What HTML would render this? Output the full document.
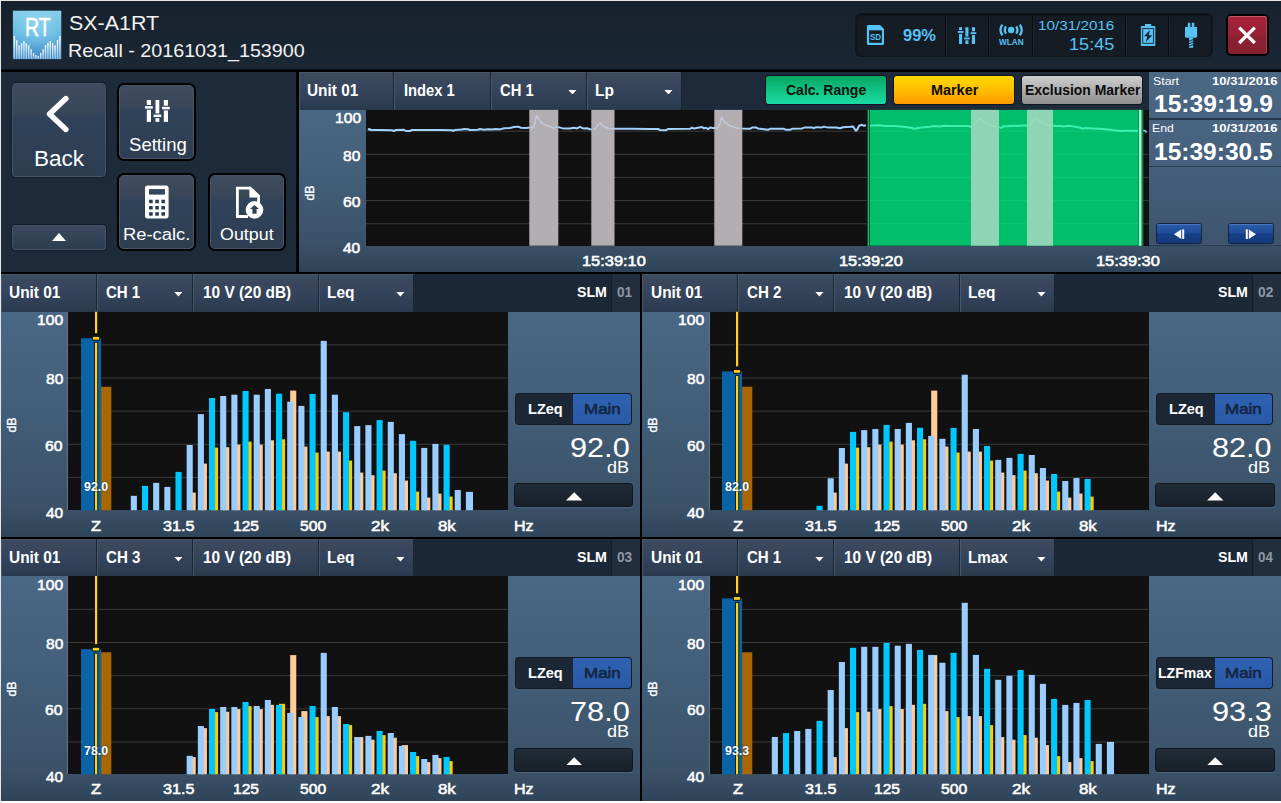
<!DOCTYPE html><html><head><meta charset="utf-8"><title>SX-A1RT Recall</title><style>
html,body{margin:0;padding:0}
body{width:1281px;height:803px;overflow:hidden;background:#fff;font-family:"Liberation Sans",sans-serif}
#r{position:absolute;left:0;top:0;width:1281px;height:803px;overflow:hidden;background:#fff}
#r div,#r span,#r svg{position:absolute;box-sizing:border-box}
.t{white-space:nowrap;line-height:1;transform-origin:0 0;display:block}
.tab{background:linear-gradient(#3d4b5f,#33435a 55%,#2a3a4e);border-right:1px solid #1b2532;box-shadow:inset 1px 0 0 #4a586b,inset 0 1px 0 #46556a}
.btn{border-radius:5px;background:linear-gradient(#3f4c5f 0%,#394759 27%,#30435a 36%,#2e3e52 100%);border:1px solid #48566a;box-shadow:0 0 0 2px #000}
.yax{background:linear-gradient(#4a6783,#435f79 45%,#3a5168)}
.xbar{background:linear-gradient(#3a5067,#2f4458)}
.side{background:linear-gradient(#4a6783,#435f79 45%,#3a5168)}
.plot{background:#111}
.dk{background:linear-gradient(#212c36,#19212a);border:1px solid #10171e;border-radius:3px;box-shadow:0 1px 0 #4a627a}
</style></head><body><div id="r">
<div style="left:0px;top:0px;width:1281px;height:1px;background:#e6e6e6"></div>
<div style="left:0px;top:0px;width:1px;height:801px;background:#e6e6e6"></div>
<div style="left:1px;top:1px;width:1280px;height:800px;background:#000"></div>
<div style="left:1px;top:1px;width:1280px;height:69px;background:linear-gradient(#17212c,#1b2735)"></div>
<div style="left:1px;top:69px;width:1280px;height:1px;background:rgba(0,0,0,.6)"></div>
<svg style="left:12px;top:10px" width="50" height="50" viewBox="12 10 50 50">
<defs><linearGradient id="lg" x1="0" y1="0" x2="0" y2="1"><stop offset="0" stop-color="#82cbea"/><stop offset=".5" stop-color="#62b6e0"/><stop offset="1" stop-color="#3f88c6"/></linearGradient>
<radialGradient id="lr" cx=".5" cy=".3" r=".6"><stop offset="0" stop-color="#9fe0f4" stop-opacity=".55"/><stop offset="1" stop-color="#9fe0f4" stop-opacity="0"/></radialGradient>
<linearGradient id="lb" x1="0" y1="0" x2="0" y2="1"><stop offset="0" stop-color="#fff" stop-opacity="1"/><stop offset="1" stop-color="#d8ecfa" stop-opacity=".55"/></linearGradient></defs>
<rect x="12.9" y="10.7" width="48.4" height="48.4" fill="url(#lg)"/><rect x="12.9" y="10.7" width="48.4" height="48.4" fill="url(#lr)"/>
<rect x="13.65" y="36.0" width="1.4" height="23.1" fill="url(#lb)"/>
<rect x="16.05" y="40.3" width="1.4" height="18.8" fill="url(#lb)"/>
<rect x="18.44" y="45.4" width="1.4" height="13.7" fill="url(#lb)"/>
<rect x="20.84" y="43.2" width="1.4" height="15.9" fill="url(#lb)"/>
<rect x="23.24" y="41.1" width="1.4" height="18.0" fill="url(#lb)"/>
<rect x="25.64" y="43.2" width="1.4" height="15.9" fill="url(#lb)"/>
<rect x="28.03" y="45.4" width="1.4" height="13.7" fill="url(#lb)"/>
<rect x="30.43" y="49.4" width="1.4" height="9.7" fill="url(#lb)"/>
<rect x="32.83" y="53.0" width="1.4" height="6.1" fill="url(#lb)"/>
<rect x="35.22" y="55.1" width="1.4" height="4.0" fill="url(#lb)"/>
<rect x="37.62" y="55.9" width="1.4" height="3.2" fill="url(#lb)"/>
<rect x="40.02" y="53.0" width="1.4" height="6.1" fill="url(#lb)"/>
<rect x="42.41" y="49.4" width="1.4" height="9.7" fill="url(#lb)"/>
<rect x="44.81" y="45.0" width="1.4" height="14.1" fill="url(#lb)"/>
<rect x="47.21" y="42.9" width="1.4" height="16.2" fill="url(#lb)"/>
<rect x="49.60" y="41.1" width="1.4" height="18.0" fill="url(#lb)"/>
<rect x="52.00" y="43.2" width="1.4" height="15.9" fill="url(#lb)"/>
<rect x="54.40" y="45.4" width="1.4" height="13.7" fill="url(#lb)"/>
<rect x="56.80" y="40.0" width="1.4" height="19.1" fill="url(#lb)"/>
<rect x="59.19" y="36.0" width="1.4" height="23.1" fill="url(#lb)"/>
</svg>
<span class="t" style="left:24.83px;top:15.33px;font-size:25.24px;font-weight:400;color:#fff;transform:scaleX(0.7761);-webkit-text-stroke:0.5px #fff;">RT</span>
<span class="t" style="left:68.74px;top:13.07px;font-size:20.71px;font-weight:400;color:#f2f2f2;transform:scaleX(1.0344);">SX-A1RT</span>
<span class="t" style="left:68.12px;top:40.86px;font-size:19.07px;font-weight:400;color:#f2f2f2;transform:scaleX(1.0339);">Recall - 20161031_153900</span>
<div style="left:856px;top:14px;width:356px;height:42px;background:#161c23;border-radius:5px;box-shadow:0 0 0 1px #10161c, inset 0 1px 2px #0b0f14"></div>
<div style="left:945px;top:15px;width:1px;height:40px;background:#090c10"></div>
<div style="left:946px;top:15px;width:1px;height:40px;background:#1e252d"></div>
<div style="left:988px;top:15px;width:1px;height:40px;background:#090c10"></div>
<div style="left:989px;top:15px;width:1px;height:40px;background:#1e252d"></div>
<div style="left:1032px;top:15px;width:1px;height:40px;background:#090c10"></div>
<div style="left:1033px;top:15px;width:1px;height:40px;background:#1e252d"></div>
<div style="left:1125px;top:15px;width:1px;height:40px;background:#090c10"></div>
<div style="left:1126px;top:15px;width:1px;height:40px;background:#1e252d"></div>
<div style="left:1168px;top:15px;width:1px;height:40px;background:#090c10"></div>
<div style="left:1169px;top:15px;width:1px;height:40px;background:#1e252d"></div>
<svg style="left:866px;top:24px" width="20" height="22" viewBox="866 24 20 22">
<path d="M866.9 26.4 Q866.9 25 868.3 25 H880 L884 29 V43.6 Q884 45 882.6 45 H868.3 Q866.9 45 866.9 43.6 Z" fill="#56c3f8"/>
<rect x="869.1" y="30.3" width="12.8" height="12.5" fill="#171d24"/>
<text x="875.5" y="40" font-family="Liberation Sans,sans-serif" font-size="8.7" font-weight="700" fill="#56c3f8" text-anchor="middle" textLength="11.2" lengthAdjust="spacingAndGlyphs">SD</text></svg>
<span class="t" style="left:903.42px;top:27.35px;font-size:17.42px;font-weight:700;color:#56c3f8;transform:scaleX(0.9439);">99%</span>
<svg style="left:955px;top:25px" width="24" height="21" viewBox="955 25 24 21"><rect x="959.05" y="27.2" width="3.1" height="16.8" fill="#56c3f8"/><rect x="957.4499999999999" y="30.05" width="6.3" height="3.8" fill="#171d24"/><rect x="957.75" y="31.0" width="5.7" height="1.9" fill="#56c3f8"/><rect x="965.35" y="27.2" width="3.1" height="16.8" fill="#56c3f8"/><rect x="963.75" y="36.550000000000004" width="6.3" height="3.8" fill="#171d24"/><rect x="964.0500000000001" y="37.5" width="5.7" height="1.9" fill="#56c3f8"/><rect x="971.9" y="27.2" width="3.1" height="16.8" fill="#56c3f8"/><rect x="970.3" y="31.300000000000004" width="6.3" height="3.8" fill="#171d24"/><rect x="970.6" y="32.25" width="5.7" height="1.9" fill="#56c3f8"/></svg>
<svg style="left:997px;top:22px" width="28" height="16" viewBox="997 22 28 16">
<circle cx="1011.1" cy="30" r="3.25" fill="#56c3f8"/>
<g fill="none" stroke="#56c3f8" stroke-width="2.3" stroke-linecap="butt">
<path d="M1006 26.3 Q1003.5 30 1006 33.7"/><path d="M1016.2 26.3 Q1018.7 30 1016.2 33.7"/>
<path d="M1002.4 24.6 Q998.6 30 1002.4 35.4"/><path d="M1019.8 24.6 Q1023.6 30 1019.8 35.4"/></g></svg>
<span class="t" style="left:999.00px;top:38.00px;font-size:8.50px;font-weight:700;color:#56c3f8;transform:scaleX(0.9631);">WLAN</span>
<span class="t" style="left:1037.85px;top:20.48px;font-size:12.89px;font-weight:400;color:#56c3f8;transform:scaleX(1.1847);">10/31/2016</span>
<span class="t" style="left:1069.14px;top:36.76px;font-size:15.64px;font-weight:400;color:#56c3f8;transform:scaleX(1.1583);">15:45</span>
<svg style="left:1139px;top:22px" width="18" height="26" viewBox="1139 22 18 26">
<rect x="1145" y="24" width="6.2" height="2.6" fill="#56c3f8"/>
<rect x="1140.9" y="25.9" width="14.4" height="20.1" rx="0.8" fill="#56c3f8"/>
<rect x="1142.7" y="28.6" width="10.8" height="14.7" fill="none" stroke="#1b242e" stroke-width="0.9"/>
<path d="M1150 30 L1144 36.2 H1147.2 L1145.9 41.9 L1152.2 35.3 H1148.7 Z" fill="#1b242e"/></svg>
<svg style="left:1183px;top:21px" width="16" height="28" viewBox="1183 21 16 28">
<g fill="#56c3f8"><rect x="1187.8" y="22.8" width="2.5" height="5"/><rect x="1191.8" y="22.8" width="2.5" height="5"/>
<path d="M1185 26.9 H1197.1 V36.2 Q1197.1 37.8 1195.5 37.8 H1186.6 Q1185 37.8 1185 36.2 Z"/>
<rect x="1189" y="37.6" width="4.1" height="10.2"/></g>
<g stroke="#171d24" stroke-width="0.9"><line x1="1188.6" y1="41.4" x2="1193.5" y2="39.4"/><line x1="1188.6" y1="43.9" x2="1193.5" y2="41.9"/><line x1="1188.6" y1="46.4" x2="1193.5" y2="44.4"/></g></svg>
<div style="left:1226px;top:14px;width:43px;height:42px;background:#000;border-radius:5px"></div>
<div style="left:1228px;top:16px;width:39px;height:38px;border-radius:3px;background:linear-gradient(#a62238,#962034 50%,#8c2132 52%,#842030);box-shadow:inset 0 1px 0 #c4566a, inset -1px 0 0 #b03a50"></div>
<svg style="left:1236px;top:24px" width="22" height="22" viewBox="0 0 22 22"><g stroke="#fff" stroke-width="3.2" stroke-linecap="butt"><line x1="3.2" y1="3.6" x2="18.8" y2="19"/><line x1="18.8" y1="3.6" x2="3.2" y2="19"/></g></svg>
<div style="left:1px;top:72px;width:296px;height:200px;background:#1c2a3a"></div>
<div style="left:296px;top:72px;width:1px;height:200px;background:rgba(0,0,0,.75)"></div>
<div style="left:12px;top:83px;width:94px;height:94px;border-radius:4px;background:linear-gradient(#3e4b5e 0%,#38475a 30%,#30425a 37%,#2d3d51 100%);border:1px solid #46546a;box-shadow:0 0 0 1px #141d28"></div>
<svg style="left:44px;top:92px" width="30" height="44" viewBox="0 0 30 44"><path d="M21.9 6.5 L5.5 22 L21.9 37.5" fill="none" stroke="#fff" stroke-width="5.4" stroke-linecap="round" stroke-linejoin="round"/></svg>
<span class="t" style="left:33.99px;top:148.05px;font-size:21.67px;font-weight:400;color:#fff;transform:scaleX(1.0411);">Back</span>
<div style="left:12px;top:225px;width:94px;height:25px;border-radius:3px;background:linear-gradient(#3b495d,#2c3d52);border:1px solid #46546a;box-shadow:0 0 0 1px #141d28"></div>
<svg style="left:51px;top:232px" width="16" height="10" viewBox="0 0 16 10"><path d="M8 1 L15 9 H1 Z" fill="#fff"/></svg>
<div class="btn" style="left:119px;top:85px;width:75px;height:74px;"></div>
<div class="btn" style="left:119px;top:175px;width:75px;height:74px;"></div>
<div class="btn" style="left:210px;top:175px;width:74px;height:74px;"></div>
<svg style="left:145.1px;top:100px" width="24.8" height="21.9" viewBox="0 0 24.8 22" preserveAspectRatio="none"><rect x="1.7999999999999998" y="0" width="4.2" height="22" fill="#fff"/><rect x="-0.6999999999999997" y="5.0" width="9.2" height="4.8" fill="#33455a"/><rect x="0.04999999999999982" y="6.15" width="7.7" height="2.5" fill="#fff"/><rect x="10.5" y="0" width="3.8" height="22" fill="#fff"/><rect x="7.800000000000001" y="13.5" width="9.2" height="4.8" fill="#33455a"/><rect x="8.55" y="14.65" width="7.7" height="2.5" fill="#fff"/><rect x="18.799999999999997" y="0" width="4.2" height="22" fill="#fff"/><rect x="16.299999999999997" y="5.699999999999999" width="9.2" height="4.8" fill="#33455a"/><rect x="17.049999999999997" y="6.85" width="7.7" height="2.5" fill="#fff"/></svg>
<span class="t" style="left:128.86px;top:136.70px;font-size:17.83px;font-weight:400;color:#fff;transform:scaleX(1.0413);">Setting</span>
<svg style="left:140px;top:180px" width="40" height="44" viewBox="140 180 40 44"><rect x="145" y="185.6" width="23.6" height="32.8" rx="2.6" fill="#fff"/><rect x="149" y="189.1" width="15.9" height="5.5" fill="#34465b"/><rect x="149.1" y="199.7" width="3.6" height="3.5" fill="#2a3b50"/><rect x="155.25" y="199.7" width="3.6" height="3.5" fill="#2a3b50"/><rect x="161.4" y="199.7" width="3.6" height="3.5" fill="#2a3b50"/><rect x="149.1" y="206" width="3.6" height="3.5" fill="#2a3b50"/><rect x="155.25" y="206" width="3.6" height="3.5" fill="#2a3b50"/><rect x="161.4" y="206" width="3.6" height="3.5" fill="#2a3b50"/><rect x="149.1" y="212.2" width="3.6" height="3.5" fill="#2a3b50"/><rect x="155.25" y="212.2" width="3.6" height="3.5" fill="#2a3b50"/><rect x="161.4" y="212.2" width="3.6" height="3.5" fill="#2a3b50"/></svg>
<span class="t" style="left:123.13px;top:227.32px;font-size:16.87px;font-weight:400;color:#fff;transform:scaleX(1.0888);">Re-calc.</span>
<svg style="left:230px;top:180px" width="40" height="44" viewBox="230 180 40 44">
<path d="M258.6 203 V196 L250 188.2 H237.4 V216.5 H248" fill="none" stroke="#fff" stroke-width="2.8" stroke-linejoin="miter"/>
<path d="M249.4 186.8 H250.6 L260 195.6 V197.4 H249.4 Z" fill="#fff"/>
<circle cx="254.5" cy="209.9" r="8.8" fill="#fff"/>
<path d="M254.5 205 L259 209 H256.6 V213.8 H252.4 V209 H250 Z" fill="#2f4156"/></svg>
<span class="t" style="left:220.10px;top:227.32px;font-size:16.87px;font-weight:400;color:#fff;transform:scaleX(1.0588);">Output</span>
<div style="left:299px;top:72px;width:982px;height:200px;background:#1c2a3a"></div>
<div class="tab" style="left:299px;top:72px;width:95px;height:38px;"></div>
<div class="tab" style="left:394px;top:72px;width:97px;height:38px;"></div>
<div class="tab" style="left:491px;top:72px;width:96px;height:38px;"></div>
<div class="tab" style="left:587px;top:72px;width:95px;height:38px;"></div>
<span class="t" style="left:307.48px;top:82.65px;font-size:15.78px;font-weight:700;color:#fff;transform:scaleX(0.9753);">Unit 01</span>
<span class="t" style="left:403.84px;top:82.65px;font-size:15.78px;font-weight:700;color:#fff;transform:scaleX(0.9334);">Index 1</span>
<span class="t" style="left:500.01px;top:82.65px;font-size:15.78px;font-weight:700;color:#fff;transform:scaleX(0.9351);">CH 1</span>
<span class="t" style="left:595.19px;top:82.63px;font-size:15.80px;font-weight:700;color:#fff;transform:scaleX(0.9820);">Lp</span>
<svg style="left:568.2px;top:89.8px" width="8.8" height="4.6" viewBox="0 0 10 5"><path d="M0.4 0 H9.6 L5 5 Z" fill="#fff"/></svg>
<svg style="left:663.8px;top:89.8px" width="8.8" height="4.6" viewBox="0 0 10 5"><path d="M0.4 0 H9.6 L5 5 Z" fill="#fff"/></svg>
<div style="left:766px;top:76px;width:120px;height:28px;border-radius:3px;background:linear-gradient(#08a562,#12c888 60%,#1bdba2);box-shadow:0 0 0 1px #0d1620"></div>
<span class="t" style="left:785.94px;top:82.92px;font-size:14.27px;font-weight:700;color:#07130e;transform:scaleX(0.9817);">Calc. Range</span>
<div style="left:894px;top:76px;width:120px;height:28px;border-radius:3px;background:linear-gradient(#ffd800,#ffc400 40%,#ff9a00);box-shadow:0 0 0 1px #0d1620"></div>
<span class="t" style="left:930.66px;top:82.92px;font-size:14.27px;font-weight:700;color:#0d0a02;transform:scaleX(1.0098);">Marker</span>
<div style="left:1022px;top:76px;width:120px;height:28px;border-radius:3px;background:linear-gradient(#cfcfcf,#b0b0b0 45%,#8e8e8e);box-shadow:0 0 0 1px #0d1620"></div>
<span class="t" style="left:1024.69px;top:82.92px;font-size:14.27px;font-weight:700;color:#0b0b0b;transform:scaleX(0.9762);">Exclusion Marker</span>
<div class="yax" style="left:299px;top:110px;width:67px;height:136px;"></div>
<div class="plot" style="left:366px;top:110px;width:783px;height:136px;"></div>
<div class="xbar" style="left:299px;top:246px;width:982px;height:26px;"></div>
<svg style="left:366px;top:109px" width="783" height="138" viewBox="366 109 783 138"><line x1="366" x2="1148.7" y1="131.2" y2="131.2" stroke="#3c3c3c" stroke-width="1"/><line x1="366" x2="1148.7" y1="154.3" y2="154.3" stroke="#3c3c3c" stroke-width="1"/><line x1="366" x2="1148.7" y1="177.4" y2="177.4" stroke="#3c3c3c" stroke-width="1"/><line x1="366" x2="1148.7" y1="200.6" y2="200.6" stroke="#3c3c3c" stroke-width="1"/><line x1="366" x2="1148.7" y1="223.8" y2="223.8" stroke="#3c3c3c" stroke-width="1"/><polyline fill="none" stroke="#a4d2ff" stroke-width="2" stroke-linejoin="round" points="368,130 369,129 371,130 380,130 392,130.2 394,131 396,130 404,129.8 406,131 410,131 412,130 440,130 452,130.2 453,131 455,130 462,129.6 464,129 468,129.2 470,130 478,129.8 480,129 484,129.8 488,129.2 492,129.6 496,129 500,129.4 504,128.32 510,128.0 514,126.92 518,126.64 521,127.78 526,128.08 530,127.6 533,127.94 535,123.3 536.5,115.87 538,117.24 540,120.7 543,123.8 547,125.8 551,127.0 554,128.2 557,126.8 560,127.6 564,128.6 570,128.4 574,127.8 577,128.4 580,126.8 583,128.4 587,128.2 590,129.2 594,129.6 596,127.6 599,123.8 600.5,122.8 602,125.0 605,127.2 609,128.4 614,128.8 630,128.8 650,129.0 658,129.0 660,130.0 666,130.2 668,129.0 690,128.8 692,127.6 694,128.6 698,127.8 702,127.0 704,128.4 706,127.8 708,129.2 710,127.6 714,128.2 718,127.8 720,123.2 721.5,117.4 723,119.4 725,122.2 728,124.8 732,126.6 736,127.8 740,128.6 750,128.8 752,127.6 756,127.4 758,128.6 764,129.2 768,129.8 770,128.8 784,128.8 786,129.8 790,129.8 792,128.8 802,128.4 805,127.4 812,127.4 814,128.2 816,127.2 822,127.4 824,126.6 828,127.6 836,127.4 840,128.2 843,127.2 850,126.8 853,126.4 854.5,128.8 856,130.8 857.5,129.0 859,125.8 862,124.8 864,125.8 866,125.2"/><polyline fill="none" stroke="#9fd0ff" stroke-width="1.5" points="1143,130.4 1145,130.6 1146.5,132.4"/><rect x="529.3" y="109.9" width="29.0" height="135.79999999999998" fill="#b2aeb2"/><rect x="591.3" y="109.9" width="23.200000000000045" height="135.79999999999998" fill="#b2aeb2"/><rect x="714.3" y="109.9" width="28.0" height="135.79999999999998" fill="#b2aeb2"/><polyline fill="none" stroke="#c2cadb" stroke-width="1.5" stroke-linejoin="round" points="530,127.6 533,127.94 535,123.3 536.5,115.87 538,117.24 540,120.7 543,123.8 547,125.8 551,127.0 554,128.2 557,126.8"/><polyline fill="none" stroke="#c2cadb" stroke-width="1.5" stroke-linejoin="round" points="594,129.6 596,127.6 599,123.8 600.5,122.8 602,125.0 605,127.2 609,128.4 614,128.8"/><polyline fill="none" stroke="#c2cadb" stroke-width="1.5" stroke-linejoin="round" points="714,128.2 718,127.8 720,123.2 721.5,117.4 723,119.4 725,122.2 728,124.8 732,126.6 736,127.8 740,128.6"/><rect x="867" y="109.9" width="276.2" height="135.79999999999998" fill="#00be69"/><line x1="870" x2="1139" y1="131.2" y2="131.2" stroke="#10c777" stroke-width="1"/><line x1="870" x2="1139" y1="154.3" y2="154.3" stroke="#10c777" stroke-width="1"/><line x1="870" x2="1139" y1="177.4" y2="177.4" stroke="#10c777" stroke-width="1"/><line x1="870" x2="1139" y1="200.6" y2="200.6" stroke="#10c777" stroke-width="1"/><line x1="870" x2="1139" y1="223.8" y2="223.8" stroke="#10c777" stroke-width="1"/><rect x="971" y="109.9" width="28" height="135.79999999999998" fill="#8fd5b5"/><rect x="1027" y="109.9" width="26" height="135.79999999999998" fill="#8fd5b5"/><polyline fill="none" stroke="#35eaa4" stroke-width="1.7" stroke-linejoin="round" points="870,126 872,125.4 880,125.2 884,126 896,126 900,126.6 906,127 912,128 914,128.8 918,128 924,127.2 930,126.8 934,126 940,126.4 944,125.8 950,126 960,126 968,126 970,126.6 1001,128 1003,126.6 1010,126 1020,125.8 1060,126 1064,126.6 1068,125.8 1074,126.6 1080,127.6 1082,128.6 1086,128 1092,128.4 1100,128.8 1108,129.6 1116,130.4 1120,131 1128,130.8 1138,130.8" style="display:none"/><polyline fill="none" stroke="#3cf0ae" stroke-width="2" stroke-linejoin="round" points="870,126 872,125.4 880,125.2 884,126 896,126 900,126.6 906,127 912,128 914,128.8 918,128 924,127.2 930,126.8 934,126 940,126.4 944,125.8 950,126 960,126 968,126 970,126.6 972,126.6"/><polyline fill="none" stroke="#9adcbe" stroke-width="1.3" stroke-linejoin="round" points="970,126.6 972,126.6 975,124 978,120.4 979.5,118.2 981,119.6 984,122.4 988,124.6 992,126 996,126.6 999,126.8"/><polyline fill="none" stroke="#3cf0ae" stroke-width="2" stroke-linejoin="round" points="999,126.8 1001,128 1003,126.6 1010,126 1020,125.8 1027,125.6"/><polyline fill="none" stroke="#9adcbe" stroke-width="1.3" stroke-linejoin="round" points="1027,125.6 1030,124.6 1033,121 1035.5,117.6 1037.5,118.4 1040,121 1044,123.6 1048,125.2 1053,125.8"/><polyline fill="none" stroke="#3cf0ae" stroke-width="2" stroke-linejoin="round" points="1053,125.8 1060,126 1064,126.6 1068,125.8 1074,126.6 1080,127.6 1082,128.6 1086,128 1092,128.4 1100,128.8 1108,129.6 1116,130.4 1120,131 1128,130.8 1138,130.8"/><rect x="867" y="109.9" width="1" height="135.79999999999998" fill="#075a2c"/><rect x="868" y="109.9" width="1" height="135.79999999999998" fill="#19b060"/><rect x="869" y="109.9" width="1" height="135.79999999999998" fill="#064d26"/><rect x="1138.2" y="109.9" width="1" height="135.79999999999998" fill="#0c9a52"/><rect x="1139.2" y="109.9" width="2" height="135.79999999999998" fill="#c9ffe4"/><rect x="1142.2" y="109.9" width="1" height="135.79999999999998" fill="#0a6d38"/></svg>
<span class="t" style="left:334.58px;top:109.93px;font-size:15.50px;font-weight:400;color:#fff;transform:scaleX(1.0081);-webkit-text-stroke:0.55px #fff;">100</span>
<span class="t" style="left:343.33px;top:148.33px;font-size:15.50px;font-weight:400;color:#fff;transform:scaleX(1.0035);-webkit-text-stroke:0.55px #fff;">80</span>
<span class="t" style="left:343.16px;top:193.93px;font-size:15.50px;font-weight:400;color:#fff;transform:scaleX(1.0133);-webkit-text-stroke:0.55px #fff;">60</span>
<span class="t" style="left:343.44px;top:240.33px;font-size:15.50px;font-weight:400;color:#fff;transform:scaleX(0.9967);-webkit-text-stroke:0.55px #fff;">40</span>
<span class="t" style="left:310.3px;top:192.5px;font-size:13.4px;font-weight:400;color:#fff;-webkit-text-stroke:0.35px #fff;transform:translate(-50%,-50%) rotate(-90deg) scaleX(.93);transform-origin:50% 50%">dB</span>
<span class="t" style="left:582.27px;top:254.32px;font-size:14.27px;font-weight:400;color:#fff;transform:scaleX(1.1497);-webkit-text-stroke:0.55px #fff;">15:39:10</span>
<span class="t" style="left:839.47px;top:254.32px;font-size:14.27px;font-weight:400;color:#fff;transform:scaleX(1.1497);-webkit-text-stroke:0.55px #fff;">15:39:20</span>
<span class="t" style="left:1096.47px;top:254.32px;font-size:14.27px;font-weight:400;color:#fff;transform:scaleX(1.1497);-webkit-text-stroke:0.55px #fff;">15:39:30</span>
<div style="left:1149px;top:72px;width:132px;height:173px;background:linear-gradient(#4a6784 0%,#46627f 45%,#3d546c 100%)"></div>
<div style="left:1149px;top:118px;width:132px;height:2px;background:#26384c"></div>
<div style="left:1149px;top:166px;width:132px;height:1px;background:#26384c"></div>
<div style="left:1149px;top:245px;width:132px;height:1px;background:#2b3e54"></div>
<span class="t" style="left:1152.85px;top:75.65px;font-size:11.52px;font-weight:400;color:#fff;transform:scaleX(1.0701);">Start</span>
<span class="t" style="left:1211.51px;top:75.65px;font-size:11.52px;font-weight:700;color:#fff;transform:scaleX(1.1365);">10/31/2016</span>
<span class="t" style="left:1153.52px;top:93.26px;font-size:23.32px;font-weight:700;color:#fff;transform:scaleX(1.0549);">15:39:19.9</span>
<span class="t" style="left:1152.42px;top:123.25px;font-size:11.52px;font-weight:400;color:#fff;transform:scaleX(1.0637);">End</span>
<span class="t" style="left:1211.51px;top:123.25px;font-size:11.52px;font-weight:700;color:#fff;transform:scaleX(1.1365);">10/31/2016</span>
<span class="t" style="left:1153.53px;top:140.86px;font-size:23.32px;font-weight:700;color:#fff;transform:scaleX(1.0526);">15:39:30.5</span>
<div style="left:1157px;top:224px;width:44px;height:19px;border-radius:2px;background:linear-gradient(#2b5cab,#1f4c98 48%,#163f86 52%,#143a7c);box-shadow:0 0 0 1px #12233c, inset 0 1px 0 #4a78c0"></div>
<svg style="left:1157.2px;top:223.5px" width="44" height="20" viewBox="0 0 44 20"><g fill="#fff"><path d="M17 10.2 L24.2 5.4 V15 Z"/><rect x="25.2" y="5.4" width="2" height="9.6"/></g></svg>
<div style="left:1229px;top:224px;width:44px;height:19px;border-radius:2px;background:linear-gradient(#2b5cab,#1f4c98 48%,#163f86 52%,#143a7c);box-shadow:0 0 0 1px #12233c, inset 0 1px 0 #4a78c0"></div>
<svg style="left:1229.3px;top:223.5px" width="44" height="20" viewBox="0 0 44 20"><g fill="#fff" transform="translate(44,0) scale(-1,1)"><path d="M17 10.2 L24.2 5.4 V15 Z"/><rect x="25.2" y="5.4" width="2" height="9.6"/></g></svg>
<div style="left:1px;top:274px;width:639px;height:263px;background:#1c2a3a"></div>
<div class="tab" style="left:1px;top:274px;width:96px;height:38px;"></div>
<div class="tab" style="left:97px;top:274px;width:96px;height:38px;"></div>
<div class="tab" style="left:193px;top:274px;width:126px;height:38px;"></div>
<div class="tab" style="left:319px;top:274px;width:95px;height:38px;"></div>
<div style="left:414px;top:274px;width:197px;height:38px;background:#1b2837"></div>
<div style="left:611px;top:274px;width:29px;height:38px;background:#212e3e;border-left:1px solid #141d28"></div>
<span class="t" style="left:9.38px;top:284.75px;font-size:15.78px;font-weight:700;color:#fff;transform:scaleX(0.9772);">Unit 01</span>
<span class="t" style="left:105.90px;top:284.75px;font-size:15.78px;font-weight:700;color:#fff;transform:scaleX(0.9523);">CH 1</span>
<svg style="left:173.6px;top:292.0px" width="8.8" height="4.6" viewBox="0 0 10 5"><path d="M0.4 0 H9.6 L5 5 Z" fill="#fff"/></svg>
<span class="t" style="left:202.67px;top:284.64px;font-size:15.90px;font-weight:700;color:#fff;transform:scaleX(0.9700);">10 V (20 dB)</span>
<span class="t" style="left:327.20px;top:284.64px;font-size:15.90px;font-weight:700;color:#fff;transform:scaleX(0.9711);">Leq</span>
<svg style="left:395.9px;top:292.0px" width="8.8" height="4.6" viewBox="0 0 10 5"><path d="M0.4 0 H9.6 L5 5 Z" fill="#fff"/></svg>
<span class="t" style="left:576.97px;top:286.47px;font-size:13.85px;font-weight:700;color:#fff;transform:scaleX(1.0245);">SLM</span>
<span class="t" style="left:616.66px;top:286.47px;font-size:13.85px;font-weight:700;color:#8e98a3;transform:scaleX(0.9808);">01</span>
<div class="yax" style="left:1px;top:312px;width:67px;height:198px;"></div>
<div class="plot" style="left:68px;top:312px;width:440px;height:198px;"></div>
<div class="side" style="left:508px;top:312px;width:132px;height:198px;"></div>
<div style="left:67px;top:312px;width:1px;height:198px;background:#5d748c"></div>
<div style="left:508px;top:510px;width:132px;height:1px;background:#24364b"></div>
<div class="xbar" style="left:1px;top:510px;width:639px;height:27px;"></div>
<svg style="left:68px;top:310px" width="440" height="202" viewBox="68 310 440 202"><clipPath id="c01"><rect x="68.2" y="311.5" width="439.4" height="198.80"/></clipPath><g clip-path="url(#c01)"><line x1="68.2" x2="507.6" y1="344.85" y2="344.85" stroke="#3b3b3b" stroke-width="1"/><line x1="68.2" x2="507.6" y1="378.00" y2="378.00" stroke="#3b3b3b" stroke-width="1"/><line x1="68.2" x2="507.6" y1="411.15" y2="411.15" stroke="#3b3b3b" stroke-width="1"/><line x1="68.2" x2="507.6" y1="444.30" y2="444.30" stroke="#3b3b3b" stroke-width="1"/><line x1="68.2" x2="507.6" y1="477.45" y2="477.45" stroke="#3b3b3b" stroke-width="1"/><rect x="81" y="338.22" width="20.1" height="174.08" fill="#0a63a6"/><rect x="101.1" y="386.78" width="10.2" height="125.52" fill="#a96704"/><rect x="130.80" y="495.80" width="6.1" height="16.80" fill="#99ccff"/><rect x="141.97" y="485.90" width="6.1" height="26.70" fill="#00c8ff"/><rect x="153.14" y="482.90" width="6.1" height="29.70" fill="#99ccff"/><rect x="164.31" y="486.90" width="6.1" height="25.70" fill="#99ccff"/><rect x="175.48" y="471.90" width="6.1" height="40.70" fill="#00c8ff"/><rect x="189.65" y="492.60" width="6.1" height="20.00" fill="#ffcc99"/><rect x="186.65" y="445.00" width="6.1" height="67.60" fill="#99ccff"/><rect x="200.82" y="463.60" width="6.1" height="49.00" fill="#ffcc99"/><rect x="197.82" y="414.10" width="6.1" height="98.50" fill="#99ccff"/><rect x="211.99" y="447.60" width="6.1" height="65.00" fill="#ffcc00"/><rect x="208.99" y="398.00" width="6.1" height="114.60" fill="#00c8ff"/><rect x="223.16" y="447.20" width="6.1" height="65.40" fill="#ffcc99"/><rect x="220.16" y="396.00" width="6.1" height="116.60" fill="#99ccff"/><rect x="234.33" y="444.60" width="6.1" height="68.00" fill="#ffcc99"/><rect x="231.33" y="394.70" width="6.1" height="117.90" fill="#99ccff"/><rect x="245.50" y="441.60" width="6.1" height="71.00" fill="#ffcc00"/><rect x="242.50" y="391.00" width="6.1" height="121.60" fill="#00c8ff"/><rect x="256.67" y="444.60" width="6.1" height="68.00" fill="#ffcc99"/><rect x="253.67" y="394.70" width="6.1" height="117.90" fill="#99ccff"/><rect x="267.84" y="440.30" width="6.1" height="72.30" fill="#ffcc99"/><rect x="264.84" y="389.00" width="6.1" height="123.60" fill="#99ccff"/><rect x="279.01" y="439.30" width="6.1" height="73.30" fill="#ffcc00"/><rect x="276.01" y="393.70" width="6.1" height="118.90" fill="#00c8ff"/><rect x="290.18" y="390.60" width="6.1" height="122.00" fill="#ffcc99"/><rect x="287.18" y="401.70" width="6.1" height="110.90" fill="#99ccff"/><rect x="301.35" y="446.60" width="6.1" height="66.00" fill="#ffcc99"/><rect x="298.35" y="405.90" width="6.1" height="106.70" fill="#99ccff"/><rect x="312.52" y="452.60" width="6.1" height="60.00" fill="#ffcc00"/><rect x="309.52" y="394.00" width="6.1" height="118.60" fill="#00c8ff"/><rect x="323.69" y="451.60" width="6.1" height="61.00" fill="#ffcc99"/><rect x="320.69" y="340.90" width="6.1" height="171.70" fill="#99ccff"/><rect x="334.86" y="451.60" width="6.1" height="61.00" fill="#ffcc99"/><rect x="331.86" y="394.70" width="6.1" height="117.90" fill="#99ccff"/><rect x="346.03" y="460.60" width="6.1" height="52.00" fill="#ffcc00"/><rect x="343.03" y="412.20" width="6.1" height="100.40" fill="#00c8ff"/><rect x="357.20" y="472.60" width="6.1" height="40.00" fill="#ffcc99"/><rect x="354.20" y="426.10" width="6.1" height="86.50" fill="#99ccff"/><rect x="368.37" y="475.20" width="6.1" height="37.40" fill="#ffcc99"/><rect x="365.37" y="425.10" width="6.1" height="87.50" fill="#99ccff"/><rect x="379.54" y="470.60" width="6.1" height="42.00" fill="#ffcc00"/><rect x="376.54" y="420.10" width="6.1" height="92.50" fill="#00c8ff"/><rect x="390.71" y="473.20" width="6.1" height="39.40" fill="#ffcc99"/><rect x="387.71" y="421.90" width="6.1" height="90.70" fill="#99ccff"/><rect x="401.88" y="480.60" width="6.1" height="32.00" fill="#ffcc99"/><rect x="398.88" y="434.10" width="6.1" height="78.50" fill="#99ccff"/><rect x="413.05" y="491.60" width="6.1" height="21.00" fill="#ffcc00"/><rect x="410.05" y="440.80" width="6.1" height="71.80" fill="#00c8ff"/><rect x="424.22" y="497.60" width="6.1" height="15.00" fill="#ffcc99"/><rect x="421.22" y="447.90" width="6.1" height="64.70" fill="#99ccff"/><rect x="435.39" y="493.60" width="6.1" height="19.00" fill="#ffcc99"/><rect x="432.39" y="443.90" width="6.1" height="68.70" fill="#99ccff"/><rect x="446.56" y="496.60" width="6.1" height="16.00" fill="#ffcc00"/><rect x="443.56" y="444.80" width="6.1" height="67.80" fill="#00c8ff"/><rect x="454.73" y="490.00" width="6.1" height="22.60" fill="#99ccff"/><rect x="465.90" y="491.90" width="7.1" height="20.70" fill="#99ccff"/><rect x="94" y="311.5" width="4.2" height="22.32" fill="#111"/><rect x="95" y="311.5" width="2.2" height="21.72" fill="#ffd21c"/><rect x="92" y="336.02" width="8" height="4.6" fill="#111"/><rect x="92.9" y="336.92" width="6.2" height="2.7" fill="#ffd21c"/><rect x="94" y="341.82" width="4.2" height="172.08" fill="#10202e"/><rect x="95" y="342.82" width="2.2" height="172.08" fill="#ffd21c"/></g></svg>
<span class="t" style="left:84.17px;top:480.98px;font-size:12.07px;font-weight:700;color:#fff;transform:scaleX(1.0278);text-shadow:0 0 2px #0a3a66;">92.0</span>
<span class="t" style="left:36.78px;top:312.03px;font-size:15.50px;font-weight:400;color:#fff;transform:scaleX(1.0081);-webkit-text-stroke:0.55px #fff;">100</span>
<span class="t" style="left:45.53px;top:371.33px;font-size:15.50px;font-weight:400;color:#fff;transform:scaleX(1.0035);-webkit-text-stroke:0.55px #fff;">80</span>
<span class="t" style="left:45.36px;top:437.73px;font-size:15.50px;font-weight:400;color:#fff;transform:scaleX(1.0133);-webkit-text-stroke:0.55px #fff;">60</span>
<span class="t" style="left:45.64px;top:505.13px;font-size:15.50px;font-weight:400;color:#fff;transform:scaleX(0.9967);-webkit-text-stroke:0.55px #fff;">40</span>
<span class="t" style="left:12.2px;top:424.8px;font-size:13.4px;font-weight:400;color:#fff;-webkit-text-stroke:0.35px #fff;transform:translate(-50%,-50%) rotate(-90deg) scaleX(.93);transform-origin:50% 50%">dB</span>
<span class="t" style="left:91.35px;top:518.72px;font-size:14.27px;font-weight:400;color:#fff;transform:scaleX(1.1598);-webkit-text-stroke:0.55px #fff;">Z</span>
<span class="t" style="left:163.30px;top:518.72px;font-size:14.27px;font-weight:400;color:#fff;transform:scaleX(1.1313);-webkit-text-stroke:0.55px #fff;">31.5</span>
<span class="t" style="left:233.18px;top:518.72px;font-size:14.27px;font-weight:400;color:#fff;transform:scaleX(1.0899);-webkit-text-stroke:0.55px #fff;">125</span>
<span class="t" style="left:300.12px;top:518.72px;font-size:14.27px;font-weight:400;color:#fff;transform:scaleX(1.0977);-webkit-text-stroke:0.55px #fff;">500</span>
<span class="t" style="left:370.80px;top:518.72px;font-size:14.27px;font-weight:400;color:#fff;transform:scaleX(1.1927);-webkit-text-stroke:0.55px #fff;">2k</span>
<span class="t" style="left:437.98px;top:518.72px;font-size:14.27px;font-weight:400;color:#fff;transform:scaleX(1.1809);-webkit-text-stroke:0.55px #fff;">8k</span>
<span class="t" style="left:514.47px;top:518.72px;font-size:14.27px;font-weight:400;color:#fff;transform:scaleX(1.1254);-webkit-text-stroke:0.55px #fff;">Hz</span>
<div style="left:515px;top:393px;width:117px;height:32px;border-radius:4px;background:#141c26"></div>
<div style="left:516px;top:394px;width:57px;height:30px;border-radius:3px 0 0 3px;background:#1b2735"></div>
<div style="left:573px;top:394px;width:58px;height:30px;border-radius:0 3px 3px 0;background:linear-gradient(#2e62b2,#2a5aa6)"></div>
<span class="t" style="left:527.55px;top:401.74px;font-size:14.95px;font-weight:700;color:#fff;transform:scaleX(0.9736);">LZeq</span>
<span class="t" style="left:583.59px;top:401.74px;font-size:14.95px;font-weight:400;color:#15243e;transform:scaleX(1.1356);-webkit-text-stroke:0.55px #15243e;">Main</span>
<span class="t" style="left:570.42px;top:435.16px;font-size:26.75px;font-weight:400;color:#fff;transform:scaleX(1.1466);">92.0</span>
<span class="t" style="left:606.88px;top:458.69px;font-size:17.15px;font-weight:400;color:#fff;transform:scaleX(1.0529);">dB</span>
<div class="dk" style="left:514px;top:483px;width:119px;height:24px;"></div>
<svg style="left:566px;top:492.4px" width="16.4" height="8.6" viewBox="0 0 16 8"><path d="M8 0 L16 8 H0 Z" fill="#fff"/></svg>
<div style="left:642px;top:274px;width:639px;height:263px;background:#1c2a3a"></div>
<div class="tab" style="left:642px;top:274px;width:96px;height:38px;"></div>
<div class="tab" style="left:738px;top:274px;width:96px;height:38px;"></div>
<div class="tab" style="left:834px;top:274px;width:126px;height:38px;"></div>
<div class="tab" style="left:960px;top:274px;width:95px;height:38px;"></div>
<div style="left:1055px;top:274px;width:197px;height:38px;background:#1b2837"></div>
<div style="left:1252px;top:274px;width:29px;height:38px;background:#212e3e;border-left:1px solid #141d28"></div>
<span class="t" style="left:650.58px;top:284.75px;font-size:15.78px;font-weight:700;color:#fff;transform:scaleX(0.9772);">Unit 01</span>
<span class="t" style="left:747.09px;top:284.75px;font-size:15.78px;font-weight:700;color:#fff;transform:scaleX(0.9588);">CH 2</span>
<svg style="left:814.8px;top:292.0px" width="8.8" height="4.6" viewBox="0 0 10 5"><path d="M0.4 0 H9.6 L5 5 Z" fill="#fff"/></svg>
<span class="t" style="left:843.87px;top:284.64px;font-size:15.90px;font-weight:700;color:#fff;transform:scaleX(0.9700);">10 V (20 dB)</span>
<span class="t" style="left:968.40px;top:284.64px;font-size:15.90px;font-weight:700;color:#fff;transform:scaleX(0.9711);">Leq</span>
<svg style="left:1037.1px;top:292.0px" width="8.8" height="4.6" viewBox="0 0 10 5"><path d="M0.4 0 H9.6 L5 5 Z" fill="#fff"/></svg>
<span class="t" style="left:1218.17px;top:286.47px;font-size:13.85px;font-weight:700;color:#fff;transform:scaleX(1.0245);">SLM</span>
<span class="t" style="left:1257.85px;top:286.47px;font-size:13.85px;font-weight:700;color:#8e98a3;transform:scaleX(0.9951);">02</span>
<div class="yax" style="left:642px;top:312px;width:67px;height:198px;"></div>
<div class="plot" style="left:709px;top:312px;width:440px;height:198px;"></div>
<div class="side" style="left:1149px;top:312px;width:132px;height:198px;"></div>
<div style="left:709px;top:312px;width:1px;height:198px;background:#5d748c"></div>
<div style="left:1149px;top:510px;width:132px;height:1px;background:#24364b"></div>
<div class="xbar" style="left:642px;top:510px;width:639px;height:27px;"></div>
<svg style="left:709.2px;top:310px" width="440" height="202" viewBox="68 310 440 202"><clipPath id="c02"><rect x="68.2" y="311.5" width="439.4" height="198.80"/></clipPath><g clip-path="url(#c02)"><line x1="68.2" x2="507.6" y1="344.85" y2="344.85" stroke="#3b3b3b" stroke-width="1"/><line x1="68.2" x2="507.6" y1="378.00" y2="378.00" stroke="#3b3b3b" stroke-width="1"/><line x1="68.2" x2="507.6" y1="411.15" y2="411.15" stroke="#3b3b3b" stroke-width="1"/><line x1="68.2" x2="507.6" y1="444.30" y2="444.30" stroke="#3b3b3b" stroke-width="1"/><line x1="68.2" x2="507.6" y1="477.45" y2="477.45" stroke="#3b3b3b" stroke-width="1"/><rect x="81" y="371.37" width="20.1" height="140.93" fill="#0a63a6"/><rect x="101.1" y="386.78" width="10.2" height="125.52" fill="#a96704"/><rect x="175.48" y="505.80" width="6.1" height="6.80" fill="#00c8ff"/><rect x="189.65" y="492.60" width="6.1" height="20.00" fill="#ffcc99"/><rect x="186.65" y="478.30" width="6.1" height="34.30" fill="#99ccff"/><rect x="200.82" y="463.60" width="6.1" height="49.00" fill="#ffcc99"/><rect x="197.82" y="448.00" width="6.1" height="64.60" fill="#99ccff"/><rect x="211.99" y="447.60" width="6.1" height="65.00" fill="#ffcc00"/><rect x="208.99" y="431.90" width="6.1" height="80.70" fill="#00c8ff"/><rect x="223.16" y="447.20" width="6.1" height="65.40" fill="#ffcc99"/><rect x="220.16" y="430.10" width="6.1" height="82.50" fill="#99ccff"/><rect x="234.33" y="444.60" width="6.1" height="68.00" fill="#ffcc99"/><rect x="231.33" y="429.00" width="6.1" height="83.60" fill="#99ccff"/><rect x="245.50" y="441.60" width="6.1" height="71.00" fill="#ffcc00"/><rect x="242.50" y="424.90" width="6.1" height="87.70" fill="#00c8ff"/><rect x="256.67" y="444.60" width="6.1" height="68.00" fill="#ffcc99"/><rect x="253.67" y="429.00" width="6.1" height="83.60" fill="#99ccff"/><rect x="267.84" y="440.30" width="6.1" height="72.30" fill="#ffcc99"/><rect x="264.84" y="422.90" width="6.1" height="89.70" fill="#99ccff"/><rect x="279.01" y="439.30" width="6.1" height="73.30" fill="#ffcc00"/><rect x="276.01" y="427.80" width="6.1" height="84.80" fill="#00c8ff"/><rect x="290.18" y="390.60" width="6.1" height="122.00" fill="#ffcc99"/><rect x="287.18" y="435.90" width="6.1" height="76.70" fill="#99ccff"/><rect x="301.35" y="446.60" width="6.1" height="66.00" fill="#ffcc99"/><rect x="298.35" y="438.80" width="6.1" height="73.80" fill="#99ccff"/><rect x="312.52" y="452.60" width="6.1" height="60.00" fill="#ffcc00"/><rect x="309.52" y="427.90" width="6.1" height="84.70" fill="#00c8ff"/><rect x="323.69" y="451.60" width="6.1" height="61.00" fill="#ffcc99"/><rect x="320.69" y="374.70" width="6.1" height="137.90" fill="#99ccff"/><rect x="334.86" y="451.60" width="6.1" height="61.00" fill="#ffcc99"/><rect x="331.86" y="429.00" width="6.1" height="83.60" fill="#99ccff"/><rect x="346.03" y="460.60" width="6.1" height="52.00" fill="#ffcc00"/><rect x="343.03" y="446.00" width="6.1" height="66.60" fill="#00c8ff"/><rect x="357.20" y="472.60" width="6.1" height="40.00" fill="#ffcc99"/><rect x="354.20" y="459.90" width="6.1" height="52.70" fill="#99ccff"/><rect x="368.37" y="475.20" width="6.1" height="37.40" fill="#ffcc99"/><rect x="365.37" y="457.90" width="6.1" height="54.70" fill="#99ccff"/><rect x="379.54" y="470.60" width="6.1" height="42.00" fill="#ffcc00"/><rect x="376.54" y="453.90" width="6.1" height="58.70" fill="#00c8ff"/><rect x="390.71" y="473.20" width="6.1" height="39.40" fill="#ffcc99"/><rect x="387.71" y="455.00" width="6.1" height="57.60" fill="#99ccff"/><rect x="401.88" y="480.60" width="6.1" height="32.00" fill="#ffcc99"/><rect x="398.88" y="468.00" width="6.1" height="44.60" fill="#99ccff"/><rect x="413.05" y="491.60" width="6.1" height="21.00" fill="#ffcc00"/><rect x="410.05" y="474.00" width="6.1" height="38.60" fill="#00c8ff"/><rect x="424.22" y="497.60" width="6.1" height="15.00" fill="#ffcc99"/><rect x="421.22" y="481.00" width="6.1" height="31.60" fill="#99ccff"/><rect x="435.39" y="493.60" width="6.1" height="19.00" fill="#ffcc99"/><rect x="432.39" y="478.10" width="6.1" height="34.50" fill="#99ccff"/><rect x="446.56" y="496.60" width="6.1" height="16.00" fill="#ffcc00"/><rect x="443.56" y="479.00" width="6.1" height="33.60" fill="#00c8ff"/><rect x="94" y="311.5" width="4.2" height="55.47" fill="#111"/><rect x="95" y="311.5" width="2.2" height="54.87" fill="#ffd21c"/><rect x="92" y="369.17" width="8" height="4.6" fill="#111"/><rect x="92.9" y="370.07" width="6.2" height="2.7" fill="#ffd21c"/><rect x="94" y="374.97" width="4.2" height="138.93" fill="#10202e"/><rect x="95" y="375.97" width="2.2" height="138.93" fill="#ffd21c"/></g></svg>
<span class="t" style="left:725.43px;top:480.98px;font-size:12.07px;font-weight:700;color:#fff;transform:scaleX(1.0250);text-shadow:0 0 2px #0a3a66;">82.0</span>
<span class="t" style="left:677.98px;top:312.03px;font-size:15.50px;font-weight:400;color:#fff;transform:scaleX(1.0081);-webkit-text-stroke:0.55px #fff;">100</span>
<span class="t" style="left:686.73px;top:371.33px;font-size:15.50px;font-weight:400;color:#fff;transform:scaleX(1.0035);-webkit-text-stroke:0.55px #fff;">80</span>
<span class="t" style="left:686.56px;top:437.73px;font-size:15.50px;font-weight:400;color:#fff;transform:scaleX(1.0133);-webkit-text-stroke:0.55px #fff;">60</span>
<span class="t" style="left:686.84px;top:505.13px;font-size:15.50px;font-weight:400;color:#fff;transform:scaleX(0.9967);-webkit-text-stroke:0.55px #fff;">40</span>
<span class="t" style="left:653.4000000000001px;top:424.8px;font-size:13.4px;font-weight:400;color:#fff;-webkit-text-stroke:0.35px #fff;transform:translate(-50%,-50%) rotate(-90deg) scaleX(.93);transform-origin:50% 50%">dB</span>
<span class="t" style="left:732.55px;top:518.72px;font-size:14.27px;font-weight:400;color:#fff;transform:scaleX(1.1598);-webkit-text-stroke:0.55px #fff;">Z</span>
<span class="t" style="left:804.50px;top:518.72px;font-size:14.27px;font-weight:400;color:#fff;transform:scaleX(1.1313);-webkit-text-stroke:0.55px #fff;">31.5</span>
<span class="t" style="left:874.38px;top:518.72px;font-size:14.27px;font-weight:400;color:#fff;transform:scaleX(1.0899);-webkit-text-stroke:0.55px #fff;">125</span>
<span class="t" style="left:941.32px;top:518.72px;font-size:14.27px;font-weight:400;color:#fff;transform:scaleX(1.0977);-webkit-text-stroke:0.55px #fff;">500</span>
<span class="t" style="left:1012.00px;top:518.72px;font-size:14.27px;font-weight:400;color:#fff;transform:scaleX(1.1927);-webkit-text-stroke:0.55px #fff;">2k</span>
<span class="t" style="left:1079.18px;top:518.72px;font-size:14.27px;font-weight:400;color:#fff;transform:scaleX(1.1809);-webkit-text-stroke:0.55px #fff;">8k</span>
<span class="t" style="left:1155.67px;top:518.72px;font-size:14.27px;font-weight:400;color:#fff;transform:scaleX(1.1254);-webkit-text-stroke:0.55px #fff;">Hz</span>
<div style="left:1156px;top:393px;width:117px;height:32px;border-radius:4px;background:#141c26"></div>
<div style="left:1157px;top:394px;width:58px;height:30px;border-radius:3px 0 0 3px;background:#1b2735"></div>
<div style="left:1215px;top:394px;width:57px;height:30px;border-radius:0 3px 3px 0;background:linear-gradient(#2e62b2,#2a5aa6)"></div>
<span class="t" style="left:1168.75px;top:401.74px;font-size:14.95px;font-weight:700;color:#fff;transform:scaleX(0.9736);">LZeq</span>
<span class="t" style="left:1224.79px;top:401.74px;font-size:14.95px;font-weight:400;color:#15243e;transform:scaleX(1.1356);-webkit-text-stroke:0.55px #15243e;">Main</span>
<span class="t" style="left:1211.78px;top:435.16px;font-size:26.75px;font-weight:400;color:#fff;transform:scaleX(1.1435);">82.0</span>
<span class="t" style="left:1248.08px;top:458.69px;font-size:17.15px;font-weight:400;color:#fff;transform:scaleX(1.0529);">dB</span>
<div class="dk" style="left:1155px;top:483px;width:120px;height:24px;"></div>
<svg style="left:1207.2px;top:492.4px" width="16.4" height="8.6" viewBox="0 0 16 8"><path d="M8 0 L16 8 H0 Z" fill="#fff"/></svg>
<div style="left:1px;top:539px;width:639px;height:262px;background:#1c2a3a"></div>
<div class="tab" style="left:1px;top:539px;width:96px;height:37px;"></div>
<div class="tab" style="left:97px;top:539px;width:96px;height:37px;"></div>
<div class="tab" style="left:193px;top:539px;width:126px;height:37px;"></div>
<div class="tab" style="left:319px;top:539px;width:95px;height:37px;"></div>
<div style="left:414px;top:539px;width:197px;height:37px;background:#1b2837"></div>
<div style="left:611px;top:539px;width:29px;height:37px;background:#212e3e;border-left:1px solid #141d28"></div>
<span class="t" style="left:9.38px;top:549.75px;font-size:15.78px;font-weight:700;color:#fff;transform:scaleX(0.9772);">Unit 01</span>
<span class="t" style="left:105.90px;top:549.75px;font-size:15.78px;font-weight:700;color:#fff;transform:scaleX(0.9566);">CH 3</span>
<svg style="left:173.6px;top:557.0px" width="8.8" height="4.6" viewBox="0 0 10 5"><path d="M0.4 0 H9.6 L5 5 Z" fill="#fff"/></svg>
<span class="t" style="left:202.67px;top:549.64px;font-size:15.90px;font-weight:700;color:#fff;transform:scaleX(0.9700);">10 V (20 dB)</span>
<span class="t" style="left:327.20px;top:549.64px;font-size:15.90px;font-weight:700;color:#fff;transform:scaleX(0.9711);">Leq</span>
<svg style="left:395.9px;top:557.0px" width="8.8" height="4.6" viewBox="0 0 10 5"><path d="M0.4 0 H9.6 L5 5 Z" fill="#fff"/></svg>
<span class="t" style="left:576.97px;top:551.47px;font-size:13.85px;font-weight:700;color:#fff;transform:scaleX(1.0245);">SLM</span>
<span class="t" style="left:616.65px;top:551.47px;font-size:13.85px;font-weight:700;color:#8e98a3;transform:scaleX(0.9903);">03</span>
<div class="yax" style="left:1px;top:576px;width:67px;height:198px;"></div>
<div class="plot" style="left:68px;top:576px;width:440px;height:198px;"></div>
<div class="side" style="left:508px;top:576px;width:132px;height:198px;"></div>
<div style="left:67px;top:576px;width:1px;height:198px;background:#5d748c"></div>
<div style="left:508px;top:774px;width:132px;height:1px;background:#24364b"></div>
<div class="xbar" style="left:1px;top:774px;width:639px;height:27px;"></div>
<svg style="left:68px;top:575px" width="440" height="202" viewBox="68 575 440 202"><clipPath id="c03"><rect x="68.2" y="576.0" width="439.4" height="198.30"/></clipPath><g clip-path="url(#c03)"><line x1="68.2" x2="507.6" y1="609.35" y2="609.35" stroke="#3b3b3b" stroke-width="1"/><line x1="68.2" x2="507.6" y1="642.50" y2="642.50" stroke="#3b3b3b" stroke-width="1"/><line x1="68.2" x2="507.6" y1="675.65" y2="675.65" stroke="#3b3b3b" stroke-width="1"/><line x1="68.2" x2="507.6" y1="708.80" y2="708.80" stroke="#3b3b3b" stroke-width="1"/><line x1="68.2" x2="507.6" y1="741.95" y2="741.95" stroke="#3b3b3b" stroke-width="1"/><rect x="81" y="649.13" width="20.1" height="127.17" fill="#0a63a6"/><rect x="101.1" y="652.28" width="10.2" height="124.02" fill="#a96704"/><rect x="189.65" y="757.10" width="6.1" height="20.00" fill="#ffcc99"/><rect x="186.65" y="755.80" width="6.1" height="21.30" fill="#99ccff"/><rect x="200.82" y="728.10" width="6.1" height="49.00" fill="#ffcc99"/><rect x="197.82" y="726.00" width="6.1" height="51.10" fill="#99ccff"/><rect x="211.99" y="712.10" width="6.1" height="65.00" fill="#ffcc00"/><rect x="208.99" y="709.00" width="6.1" height="68.10" fill="#00c8ff"/><rect x="223.16" y="711.70" width="6.1" height="65.40" fill="#ffcc99"/><rect x="220.16" y="707.00" width="6.1" height="70.10" fill="#99ccff"/><rect x="234.33" y="709.10" width="6.1" height="68.00" fill="#ffcc99"/><rect x="231.33" y="707.00" width="6.1" height="70.10" fill="#99ccff"/><rect x="245.50" y="706.10" width="6.1" height="71.00" fill="#ffcc00"/><rect x="242.50" y="702.00" width="6.1" height="75.10" fill="#00c8ff"/><rect x="256.67" y="709.10" width="6.1" height="68.00" fill="#ffcc99"/><rect x="253.67" y="706.00" width="6.1" height="71.10" fill="#99ccff"/><rect x="267.84" y="704.80" width="6.1" height="72.30" fill="#ffcc99"/><rect x="264.84" y="700.00" width="6.1" height="77.10" fill="#99ccff"/><rect x="279.01" y="703.80" width="6.1" height="73.30" fill="#ffcc00"/><rect x="276.01" y="704.90" width="6.1" height="72.20" fill="#00c8ff"/><rect x="290.18" y="655.10" width="6.1" height="122.00" fill="#ffcc99"/><rect x="287.18" y="713.00" width="6.1" height="64.10" fill="#99ccff"/><rect x="301.35" y="711.10" width="6.1" height="66.00" fill="#ffcc99"/><rect x="298.35" y="717.00" width="6.1" height="60.10" fill="#99ccff"/><rect x="312.52" y="717.10" width="6.1" height="60.00" fill="#ffcc00"/><rect x="309.52" y="706.00" width="6.1" height="71.10" fill="#00c8ff"/><rect x="323.69" y="716.10" width="6.1" height="61.00" fill="#ffcc99"/><rect x="320.69" y="652.90" width="6.1" height="124.20" fill="#99ccff"/><rect x="334.86" y="716.10" width="6.1" height="61.00" fill="#ffcc99"/><rect x="331.86" y="707.00" width="6.1" height="70.10" fill="#99ccff"/><rect x="346.03" y="725.10" width="6.1" height="52.00" fill="#ffcc00"/><rect x="343.03" y="724.00" width="6.1" height="53.10" fill="#00c8ff"/><rect x="357.20" y="737.10" width="6.1" height="40.00" fill="#ffcc99"/><rect x="354.20" y="737.00" width="6.1" height="40.10" fill="#99ccff"/><rect x="368.37" y="739.70" width="6.1" height="37.40" fill="#ffcc99"/><rect x="365.37" y="735.90" width="6.1" height="41.20" fill="#99ccff"/><rect x="379.54" y="735.10" width="6.1" height="42.00" fill="#ffcc00"/><rect x="376.54" y="730.90" width="6.1" height="46.20" fill="#00c8ff"/><rect x="390.71" y="737.70" width="6.1" height="39.40" fill="#ffcc99"/><rect x="387.71" y="733.00" width="6.1" height="44.10" fill="#99ccff"/><rect x="401.88" y="745.10" width="6.1" height="32.00" fill="#ffcc99"/><rect x="398.88" y="745.90" width="6.1" height="31.20" fill="#99ccff"/><rect x="413.05" y="756.10" width="6.1" height="21.00" fill="#ffcc00"/><rect x="410.05" y="752.00" width="6.1" height="25.10" fill="#00c8ff"/><rect x="424.22" y="762.10" width="6.1" height="15.00" fill="#ffcc99"/><rect x="421.22" y="759.00" width="6.1" height="18.10" fill="#99ccff"/><rect x="435.39" y="758.10" width="6.1" height="19.00" fill="#ffcc99"/><rect x="432.39" y="754.90" width="6.1" height="22.20" fill="#99ccff"/><rect x="446.56" y="761.10" width="6.1" height="16.00" fill="#ffcc00"/><rect x="443.56" y="756.90" width="6.1" height="20.20" fill="#00c8ff"/><rect x="94" y="576.0" width="4.2" height="68.73" fill="#111"/><rect x="95" y="576.0" width="2.2" height="68.13" fill="#ffd21c"/><rect x="92" y="646.93" width="8" height="4.6" fill="#111"/><rect x="92.9" y="647.83" width="6.2" height="2.7" fill="#ffd21c"/><rect x="94" y="652.73" width="4.2" height="125.17" fill="#10202e"/><rect x="95" y="653.73" width="2.2" height="125.17" fill="#ffd21c"/></g></svg>
<span class="t" style="left:84.10px;top:744.58px;font-size:12.07px;font-weight:700;color:#fff;transform:scaleX(1.0305);text-shadow:0 0 2px #0a3a66;">78.0</span>
<span class="t" style="left:36.78px;top:576.53px;font-size:15.50px;font-weight:400;color:#fff;transform:scaleX(1.0081);-webkit-text-stroke:0.55px #fff;">100</span>
<span class="t" style="left:45.53px;top:635.83px;font-size:15.50px;font-weight:400;color:#fff;transform:scaleX(1.0035);-webkit-text-stroke:0.55px #fff;">80</span>
<span class="t" style="left:45.36px;top:702.23px;font-size:15.50px;font-weight:400;color:#fff;transform:scaleX(1.0133);-webkit-text-stroke:0.55px #fff;">60</span>
<span class="t" style="left:45.64px;top:769.13px;font-size:15.50px;font-weight:400;color:#fff;transform:scaleX(0.9967);-webkit-text-stroke:0.55px #fff;">40</span>
<span class="t" style="left:12.2px;top:688.9000000000001px;font-size:13.4px;font-weight:400;color:#fff;-webkit-text-stroke:0.35px #fff;transform:translate(-50%,-50%) rotate(-90deg) scaleX(.93);transform-origin:50% 50%">dB</span>
<span class="t" style="left:91.35px;top:782.32px;font-size:14.27px;font-weight:400;color:#fff;transform:scaleX(1.1598);-webkit-text-stroke:0.55px #fff;">Z</span>
<span class="t" style="left:163.30px;top:782.32px;font-size:14.27px;font-weight:400;color:#fff;transform:scaleX(1.1313);-webkit-text-stroke:0.55px #fff;">31.5</span>
<span class="t" style="left:233.18px;top:782.32px;font-size:14.27px;font-weight:400;color:#fff;transform:scaleX(1.0899);-webkit-text-stroke:0.55px #fff;">125</span>
<span class="t" style="left:300.12px;top:782.32px;font-size:14.27px;font-weight:400;color:#fff;transform:scaleX(1.0977);-webkit-text-stroke:0.55px #fff;">500</span>
<span class="t" style="left:370.80px;top:782.32px;font-size:14.27px;font-weight:400;color:#fff;transform:scaleX(1.1927);-webkit-text-stroke:0.55px #fff;">2k</span>
<span class="t" style="left:437.98px;top:782.32px;font-size:14.27px;font-weight:400;color:#fff;transform:scaleX(1.1809);-webkit-text-stroke:0.55px #fff;">8k</span>
<span class="t" style="left:514.47px;top:782.32px;font-size:14.27px;font-weight:400;color:#fff;transform:scaleX(1.1254);-webkit-text-stroke:0.55px #fff;">Hz</span>
<div style="left:515px;top:657px;width:117px;height:32px;border-radius:4px;background:#141c26"></div>
<div style="left:516px;top:658px;width:57px;height:30px;border-radius:3px 0 0 3px;background:#1b2735"></div>
<div style="left:573px;top:658px;width:58px;height:30px;border-radius:0 3px 3px 0;background:linear-gradient(#2e62b2,#2a5aa6)"></div>
<span class="t" style="left:527.55px;top:665.84px;font-size:14.95px;font-weight:700;color:#fff;transform:scaleX(0.9736);">LZeq</span>
<span class="t" style="left:583.59px;top:665.84px;font-size:14.95px;font-weight:400;color:#15243e;transform:scaleX(1.1356);-webkit-text-stroke:0.55px #15243e;">Main</span>
<span class="t" style="left:570.26px;top:699.26px;font-size:26.75px;font-weight:400;color:#fff;transform:scaleX(1.1497);">78.0</span>
<span class="t" style="left:606.88px;top:722.79px;font-size:17.15px;font-weight:400;color:#fff;transform:scaleX(1.0529);">dB</span>
<div class="dk" style="left:514px;top:748px;width:119px;height:24px;"></div>
<svg style="left:566px;top:756.5px" width="16.4" height="8.6" viewBox="0 0 16 8"><path d="M8 0 L16 8 H0 Z" fill="#fff"/></svg>
<div style="left:642px;top:539px;width:639px;height:262px;background:#1c2a3a"></div>
<div class="tab" style="left:642px;top:539px;width:96px;height:37px;"></div>
<div class="tab" style="left:738px;top:539px;width:96px;height:37px;"></div>
<div class="tab" style="left:834px;top:539px;width:126px;height:37px;"></div>
<div class="tab" style="left:960px;top:539px;width:95px;height:37px;"></div>
<div style="left:1055px;top:539px;width:197px;height:37px;background:#1b2837"></div>
<div style="left:1252px;top:539px;width:29px;height:37px;background:#212e3e;border-left:1px solid #141d28"></div>
<span class="t" style="left:650.58px;top:549.75px;font-size:15.78px;font-weight:700;color:#fff;transform:scaleX(0.9772);">Unit 01</span>
<span class="t" style="left:747.10px;top:549.75px;font-size:15.78px;font-weight:700;color:#fff;transform:scaleX(0.9523);">CH 1</span>
<svg style="left:814.8px;top:557.0px" width="8.8" height="4.6" viewBox="0 0 10 5"><path d="M0.4 0 H9.6 L5 5 Z" fill="#fff"/></svg>
<span class="t" style="left:843.87px;top:549.64px;font-size:15.90px;font-weight:700;color:#fff;transform:scaleX(0.9700);">10 V (20 dB)</span>
<span class="t" style="left:968.41px;top:549.64px;font-size:15.90px;font-weight:700;color:#fff;transform:scaleX(0.9533);">Lmax</span>
<svg style="left:1037.1px;top:557.0px" width="8.8" height="4.6" viewBox="0 0 10 5"><path d="M0.4 0 H9.6 L5 5 Z" fill="#fff"/></svg>
<span class="t" style="left:1218.17px;top:551.47px;font-size:13.85px;font-weight:700;color:#fff;transform:scaleX(1.0245);">SLM</span>
<span class="t" style="left:1257.87px;top:551.47px;font-size:13.85px;font-weight:700;color:#8e98a3;transform:scaleX(0.9624);">04</span>
<div class="yax" style="left:642px;top:576px;width:67px;height:198px;"></div>
<div class="plot" style="left:709px;top:576px;width:440px;height:198px;"></div>
<div class="side" style="left:1149px;top:576px;width:132px;height:198px;"></div>
<div style="left:709px;top:576px;width:1px;height:198px;background:#5d748c"></div>
<div style="left:1149px;top:774px;width:132px;height:1px;background:#24364b"></div>
<div class="xbar" style="left:642px;top:774px;width:639px;height:27px;"></div>
<svg style="left:709.2px;top:575px" width="440" height="202" viewBox="68 575 440 202"><clipPath id="c04"><rect x="68.2" y="576.0" width="439.4" height="198.30"/></clipPath><g clip-path="url(#c04)"><line x1="68.2" x2="507.6" y1="609.35" y2="609.35" stroke="#3b3b3b" stroke-width="1"/><line x1="68.2" x2="507.6" y1="642.50" y2="642.50" stroke="#3b3b3b" stroke-width="1"/><line x1="68.2" x2="507.6" y1="675.65" y2="675.65" stroke="#3b3b3b" stroke-width="1"/><line x1="68.2" x2="507.6" y1="708.80" y2="708.80" stroke="#3b3b3b" stroke-width="1"/><line x1="68.2" x2="507.6" y1="741.95" y2="741.95" stroke="#3b3b3b" stroke-width="1"/><rect x="81" y="598.41" width="20.1" height="177.89" fill="#0a63a6"/><rect x="101.1" y="652.28" width="10.2" height="124.02" fill="#a96704"/><rect x="130.80" y="737.00" width="6.1" height="40.10" fill="#99ccff"/><rect x="141.97" y="733.10" width="6.1" height="44.00" fill="#00c8ff"/><rect x="153.14" y="731.00" width="6.1" height="46.10" fill="#99ccff"/><rect x="164.31" y="728.90" width="6.1" height="48.20" fill="#99ccff"/><rect x="175.48" y="720.80" width="6.1" height="56.30" fill="#00c8ff"/><rect x="189.65" y="757.10" width="6.1" height="20.00" fill="#ffcc99"/><rect x="186.65" y="690.00" width="6.1" height="87.10" fill="#99ccff"/><rect x="200.82" y="728.10" width="6.1" height="49.00" fill="#ffcc99"/><rect x="197.82" y="662.00" width="6.1" height="115.10" fill="#99ccff"/><rect x="211.99" y="712.10" width="6.1" height="65.00" fill="#ffcc00"/><rect x="208.99" y="647.80" width="6.1" height="129.30" fill="#00c8ff"/><rect x="223.16" y="711.70" width="6.1" height="65.40" fill="#ffcc99"/><rect x="220.16" y="646.80" width="6.1" height="130.30" fill="#99ccff"/><rect x="234.33" y="709.10" width="6.1" height="68.00" fill="#ffcc99"/><rect x="231.33" y="646.80" width="6.1" height="130.30" fill="#99ccff"/><rect x="245.50" y="706.10" width="6.1" height="71.00" fill="#ffcc00"/><rect x="242.50" y="642.90" width="6.1" height="134.20" fill="#00c8ff"/><rect x="256.67" y="709.10" width="6.1" height="68.00" fill="#ffcc99"/><rect x="253.67" y="645.70" width="6.1" height="131.40" fill="#99ccff"/><rect x="267.84" y="704.80" width="6.1" height="72.30" fill="#ffcc99"/><rect x="264.84" y="643.90" width="6.1" height="133.20" fill="#99ccff"/><rect x="279.01" y="703.80" width="6.1" height="73.30" fill="#ffcc00"/><rect x="276.01" y="649.90" width="6.1" height="127.20" fill="#00c8ff"/><rect x="290.18" y="655.10" width="6.1" height="122.00" fill="#ffcc99"/><rect x="287.18" y="654.90" width="6.1" height="122.20" fill="#99ccff"/><rect x="301.35" y="711.10" width="6.1" height="66.00" fill="#ffcc99"/><rect x="298.35" y="662.70" width="6.1" height="114.40" fill="#99ccff"/><rect x="312.52" y="717.10" width="6.1" height="60.00" fill="#ffcc00"/><rect x="309.52" y="652.80" width="6.1" height="124.30" fill="#00c8ff"/><rect x="323.69" y="716.10" width="6.1" height="61.00" fill="#ffcc99"/><rect x="320.69" y="602.80" width="6.1" height="174.30" fill="#99ccff"/><rect x="334.86" y="716.10" width="6.1" height="61.00" fill="#ffcc99"/><rect x="331.86" y="654.90" width="6.1" height="122.20" fill="#99ccff"/><rect x="346.03" y="725.10" width="6.1" height="52.00" fill="#ffcc00"/><rect x="343.03" y="668.80" width="6.1" height="108.30" fill="#00c8ff"/><rect x="357.20" y="737.10" width="6.1" height="40.00" fill="#ffcc99"/><rect x="354.20" y="679.80" width="6.1" height="97.30" fill="#99ccff"/><rect x="368.37" y="739.70" width="6.1" height="37.40" fill="#ffcc99"/><rect x="365.37" y="675.80" width="6.1" height="101.30" fill="#99ccff"/><rect x="379.54" y="735.10" width="6.1" height="42.00" fill="#ffcc00"/><rect x="376.54" y="670.00" width="6.1" height="107.10" fill="#00c8ff"/><rect x="390.71" y="737.70" width="6.1" height="39.40" fill="#ffcc99"/><rect x="387.71" y="674.90" width="6.1" height="102.20" fill="#99ccff"/><rect x="401.88" y="745.10" width="6.1" height="32.00" fill="#ffcc99"/><rect x="398.88" y="683.90" width="6.1" height="93.20" fill="#99ccff"/><rect x="413.05" y="756.10" width="6.1" height="21.00" fill="#ffcc00"/><rect x="410.05" y="698.90" width="6.1" height="78.20" fill="#00c8ff"/><rect x="424.22" y="762.10" width="6.1" height="15.00" fill="#ffcc99"/><rect x="421.22" y="704.90" width="6.1" height="72.20" fill="#99ccff"/><rect x="435.39" y="758.10" width="6.1" height="19.00" fill="#ffcc99"/><rect x="432.39" y="702.90" width="6.1" height="74.20" fill="#99ccff"/><rect x="446.56" y="761.10" width="6.1" height="16.00" fill="#ffcc00"/><rect x="443.56" y="700.00" width="6.1" height="77.10" fill="#00c8ff"/><rect x="454.73" y="743.90" width="6.1" height="33.20" fill="#99ccff"/><rect x="465.90" y="741.90" width="7.1" height="35.20" fill="#99ccff"/><rect x="94" y="576.0" width="4.2" height="18.01" fill="#111"/><rect x="95" y="576.0" width="2.2" height="17.41" fill="#ffd21c"/><rect x="92" y="596.21" width="8" height="4.6" fill="#111"/><rect x="92.9" y="597.11" width="6.2" height="2.7" fill="#ffd21c"/><rect x="94" y="602.01" width="4.2" height="175.89" fill="#10202e"/><rect x="95" y="603.01" width="2.2" height="175.89" fill="#ffd21c"/></g></svg>
<span class="t" style="left:725.37px;top:744.58px;font-size:12.07px;font-weight:700;color:#fff;transform:scaleX(1.0250);text-shadow:0 0 2px #0a3a66;">93.3</span>
<span class="t" style="left:677.98px;top:576.53px;font-size:15.50px;font-weight:400;color:#fff;transform:scaleX(1.0081);-webkit-text-stroke:0.55px #fff;">100</span>
<span class="t" style="left:686.73px;top:635.83px;font-size:15.50px;font-weight:400;color:#fff;transform:scaleX(1.0035);-webkit-text-stroke:0.55px #fff;">80</span>
<span class="t" style="left:686.56px;top:702.23px;font-size:15.50px;font-weight:400;color:#fff;transform:scaleX(1.0133);-webkit-text-stroke:0.55px #fff;">60</span>
<span class="t" style="left:686.84px;top:769.13px;font-size:15.50px;font-weight:400;color:#fff;transform:scaleX(0.9967);-webkit-text-stroke:0.55px #fff;">40</span>
<span class="t" style="left:653.4000000000001px;top:688.9000000000001px;font-size:13.4px;font-weight:400;color:#fff;-webkit-text-stroke:0.35px #fff;transform:translate(-50%,-50%) rotate(-90deg) scaleX(.93);transform-origin:50% 50%">dB</span>
<span class="t" style="left:732.55px;top:782.32px;font-size:14.27px;font-weight:400;color:#fff;transform:scaleX(1.1598);-webkit-text-stroke:0.55px #fff;">Z</span>
<span class="t" style="left:804.50px;top:782.32px;font-size:14.27px;font-weight:400;color:#fff;transform:scaleX(1.1313);-webkit-text-stroke:0.55px #fff;">31.5</span>
<span class="t" style="left:874.38px;top:782.32px;font-size:14.27px;font-weight:400;color:#fff;transform:scaleX(1.0899);-webkit-text-stroke:0.55px #fff;">125</span>
<span class="t" style="left:941.32px;top:782.32px;font-size:14.27px;font-weight:400;color:#fff;transform:scaleX(1.0977);-webkit-text-stroke:0.55px #fff;">500</span>
<span class="t" style="left:1012.00px;top:782.32px;font-size:14.27px;font-weight:400;color:#fff;transform:scaleX(1.1927);-webkit-text-stroke:0.55px #fff;">2k</span>
<span class="t" style="left:1079.18px;top:782.32px;font-size:14.27px;font-weight:400;color:#fff;transform:scaleX(1.1809);-webkit-text-stroke:0.55px #fff;">8k</span>
<span class="t" style="left:1155.67px;top:782.32px;font-size:14.27px;font-weight:400;color:#fff;transform:scaleX(1.1254);-webkit-text-stroke:0.55px #fff;">Hz</span>
<div style="left:1156px;top:657px;width:117px;height:32px;border-radius:4px;background:#141c26"></div>
<div style="left:1157px;top:658px;width:58px;height:30px;border-radius:3px 0 0 3px;background:#1b2735"></div>
<div style="left:1215px;top:658px;width:57px;height:30px;border-radius:0 3px 3px 0;background:linear-gradient(#2e62b2,#2a5aa6)"></div>
<span class="t" style="left:1157.58px;top:665.84px;font-size:14.95px;font-weight:700;color:#fff;transform:scaleX(0.9415);">LZFmax</span>
<span class="t" style="left:1224.79px;top:665.84px;font-size:14.95px;font-weight:400;color:#15243e;transform:scaleX(1.1356);-webkit-text-stroke:0.55px #15243e;">Main</span>
<span class="t" style="left:1211.62px;top:699.26px;font-size:26.75px;font-weight:400;color:#fff;transform:scaleX(1.1497);">93.3</span>
<span class="t" style="left:1248.08px;top:722.79px;font-size:17.15px;font-weight:400;color:#fff;transform:scaleX(1.0529);">dB</span>
<div class="dk" style="left:1155px;top:748px;width:120px;height:24px;"></div>
<svg style="left:1207.2px;top:756.5px" width="16.4" height="8.6" viewBox="0 0 16 8"><path d="M8 0 L16 8 H0 Z" fill="#fff"/></svg>
</div></body></html>
